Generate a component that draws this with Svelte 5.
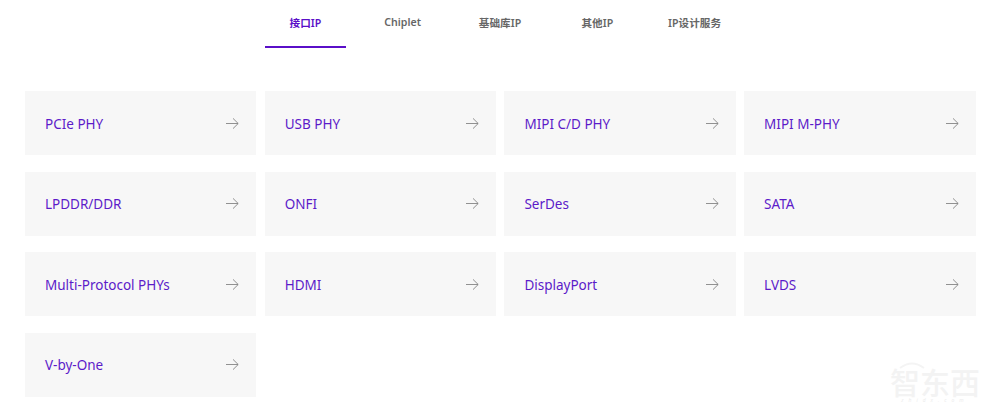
<script lang="ts">
	const tabs = ['接口IP', 'Chiplet', '基础库IP', '其他IP', 'IP设计服务'];
	const items = [
		'PCIe PHY', 'USB PHY', 'MIPI C/D PHY', 'MIPI M-PHY',
		'LPDDR/DDR', 'ONFI', 'SerDes', 'SATA',
		'Multi-Protocol PHYs', 'HDMI', 'DisplayPort', 'LVDS',
		'V-by-One'
	];
	let active = $state(0);
</script>

<div class="page">
	<nav class="tabs">
		{#each tabs as tab, i}
			<button type="button" class="tab {active === i ? 'active' : ''}" onclick={() => (active = i)}>
				{tab}
			</button>
		{/each}
	</nav>

	<div class="grid">
		{#each items as item}
			<a class="card" href="#top">
				<span class="label">{item}</span>
				<svg width="13" height="11" viewBox="0 0 13 11" fill="none" stroke="#858585" stroke-width="0.9">
					<path d="M0 5.5H12M7 0.4L12.2 5.5L7 10.6" />
				</svg>
			</a>
		{/each}
	</div>

	<div class="watermark">
		<svg class="wm-arc" width="26" height="8" viewBox="0 0 26 8" fill="none" stroke="#f4f4f4" stroke-width="2">
			<path d="M1 7Q13 -2 25 7" />
		</svg>
		<span class="wm-name">智东西</span>
		<span class="wm-site">zhidx.com</span>
	</div>
</div>

<style>
	:global(body) {
		background: #fff;
	}

	.page {
		position: relative;
		height: 419px;
		overflow: hidden;
		font-family: 'Noto Sans', 'Noto Sans CJK SC', sans-serif;
	}

	.tabs {
		display: flex;
		justify-content: center;
		gap: 16.3px;
	}

	.tab {
		width: 81px;
		height: 48px;
		padding: 0 0 2px;
		background: none;
		border: 0;
		border-bottom: 2px solid transparent;
		font-family: inherit;
		font-size: 10.6px;
		font-weight: 600;
		letter-spacing: 0.05px;
		color: #666;
		cursor: pointer;
	}

	.tab.active {
		color: #5a0fc8;
		border-bottom-color: #5a0fc8;
	}

	.grid {
		display: grid;
		grid-template-columns: repeat(4, 1fr);
		gap: 16.6px 8.3px;
		margin: 43px 24.5px 0 25px;
	}

	.card {
		display: flex;
		align-items: center;
		justify-content: space-between;
		height: 64px;
		padding: 0 17px 0 20px;
		background: #f7f7f7;
		color: #5c1bc9;
		font-size: 13.5px;
		text-decoration: none;
	}

	.label {
		padding-top: 1px;
	}

	.watermark {
		position: absolute;
		right: 20px;
		bottom: 16px;
		display: flex;
		flex-direction: column;
		align-items: center;
		color: #f3f3f3;
	}

	.wm-arc {
		align-self: flex-start;
		margin-left: 9px;
	}

	.wm-name {
		font-size: 30px;
		line-height: 27px;
		font-weight: 500;
	}

	.wm-site {
		margin-top: 1px;
		font-size: 5px;
		line-height: 6px;
		letter-spacing: 5px;
		font-style: italic;
		color: #ececec;
	}
</style>
